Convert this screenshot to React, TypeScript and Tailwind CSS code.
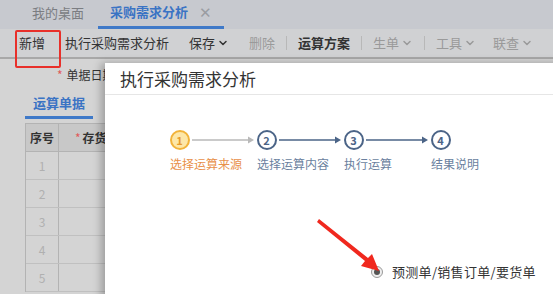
import { ChevronDown } from "lucide-react";

const font = { fontFamily: '"Microsoft YaHei", "Noto Sans CJK SC", sans-serif' };

const ToolItem = ({ label, muted, bold, drop }: { label: string; muted?: boolean; bold?: boolean; drop?: boolean }) => (
  <div className={"flex items-center gap-[2px] " + (muted ? "text-[#9a9a9a]" : "text-[#333]") + (bold ? " font-bold" : "")}>
    {label}
    {drop && <ChevronDown className="size-3" strokeWidth={3} />}
  </div>
);

const Sep = () => <div className="w-px h-[14px] bg-[#b8b8b8]" />;

const Step = ({ n, label, active }: { n: number; label: string; active?: boolean }) => (
  <div className="flex flex-col items-center w-[19px] relative">
    <div
      className={
        "size-[20px] rounded-full border-2 flex items-center justify-center text-[11px] font-bold " +
        (active ? "border-[#f2b33a] text-[#e69a2c] bg-[#fde7a8]" : "border-[#4b6487] text-[#4b6487] bg-white")
      }
    >
      {n}
    </div>
    <div className={"absolute top-[25px] left-0 whitespace-nowrap text-[12px] " + (active ? "text-[#e8904a]" : "text-[#6a7f9e]")}>
      {label}
    </div>
  </div>
);

const Arrow = ({ dark }: { dark?: boolean }) => (
  <svg width="64" height="10" viewBox="0 0 64 10" className="mx-[2px]">
    <line x1="1" y1="5" x2="58" y2="5" stroke={dark ? "#4b6487" : "#b9b9b9"} strokeWidth="1.3" />
    <path d="M57 1.5 L63 5 L57 8.5 Z" fill={dark ? "#4b6487" : "#b9b9b9"} />
  </svg>
);

export default function App() {
  return (
    <div className="w-[553px] h-[294px] relative overflow-hidden bg-[#d4d4d4]" style={font}>
      {/* tabs */}
      <div className="h-[29px] bg-[#c7c9cf] flex items-end pl-[32px] text-[13px]">
        <div className="text-[#7b7d82] pb-[7px]">我的桌面</div>
        <div className="ml-[14px] px-[12px] pb-[5px] border-b-[3px] border-[#3f79c8] flex items-center gap-[11px]">
          <span className="text-[#3a73c4] font-bold">采购需求分析</span>
          <span className="text-[#9a9ca2] text-[15px] leading-none">✕</span>
        </div>
      </div>
      {/* toolbar */}
      <div className="h-[30px] bg-[#d0d1d3] border-b-2 border-[#a8a8a8] flex items-center pl-[19px] gap-[20px] text-[13px]">
        <ToolItem label="新增" />
        <ToolItem label="执行采购需求分析" />
        <ToolItem label="保存" drop />
        <div className="flex items-center gap-[11px]">
          <ToolItem label="删除" muted />
          <Sep />
          <ToolItem label="运算方案" bold />
          <Sep />
          <ToolItem label="生单" muted drop />
          <Sep />
          <ToolItem label="工具" muted drop />
          <div className="ml-[6px]">
            <ToolItem label="联查" muted drop />
          </div>
        </div>
      </div>
      {/* red highlight */}
      <div className="absolute left-[15px] top-[30px] w-[46px] h-[38px] border-2 border-[#e8302a] rounded-[2px]" />

      <div className="pl-[25px]">
        <div className="pl-[32px] pt-[7px] h-[30px] text-[12px] text-[#333] flex items-start gap-[4px]">
          <span className="text-[#e05a5a]">*</span>
          <span>单据日期</span>
        </div>
        <div className="h-[34px] flex items-start">
          <div className="px-[8px] pb-[3px] pt-[4px] border-b-[3px] border-[#3f79c8] text-[#3a73c4] text-[13px] font-bold">运算单据</div>
        </div>
        <div className="w-[90px] border-l border-t border-[#b3b3b3] text-[12px]">
          <div className="flex h-[28px] bg-[#c8c8c8] border-b border-[#b3b3b3]">
            <div className="w-[33px] border-r border-[#b3b3b3] flex items-center justify-center font-bold text-[#333]">序号</div>
            <div className="flex-1 flex items-center pl-[16px] font-bold text-[#333]">
              <span className="text-[#e05a5a] mr-[2px] font-normal">*</span>存货
            </div>
          </div>
          {[1, 2, 3, 4, 5].map((n) => (
            <div key={n} className="flex h-[28px] border-b border-[#c0c0c0]">
              <div className="w-[33px] border-r border-[#b3b3b3] flex items-center justify-center text-[#b0b0b0]">{n}</div>
              <div className="flex-1" />
            </div>
          ))}
        </div>
      </div>

      {/* dialog */}
      <div className="absolute left-[105px] top-[63px] w-[470px] h-[260px] bg-white shadow-[-4px_0_8px_rgba(0,0,0,0.25)]">
        <div className="h-[32px] border-b border-[#e6e6e6] pl-[15px] flex items-center text-[17px] text-[#333]">执行采购需求分析</div>
        <div className="pl-[65px] pt-[35px] flex items-center">
          <Step n={1} label="选择运算来源" active />
          <Arrow />
          <Step n={2} label="选择运算内容" />
          <Arrow dark />
          <Step n={3} label="执行运算" />
          <Arrow dark />
          <Step n={4} label="结果说明" />
        </div>
        <div className="absolute left-[266px] top-[199px] flex items-center gap-[9px] text-[13px] text-[#333]">
          <div className="size-[12px] rounded-full border border-[#9a9a9a] bg-[#eee] flex items-center justify-center">
            <div className="size-[6px] rounded-full bg-[#555]" />
          </div>
          <span className="tracking-[0.3px]">预测单/销售订单/要货单</span>
        </div>
        {/* red arrow */}
        <svg className="absolute left-[208px] top-[156px]" width="70" height="56" viewBox="0 0 70 56">
          <path d="M4 3 L52 42 L48 47 L66 52 L59 35 L55 39 L6 0 Z" fill="#f0281e" />
        </svg>
      </div>
    </div>
  );
}
